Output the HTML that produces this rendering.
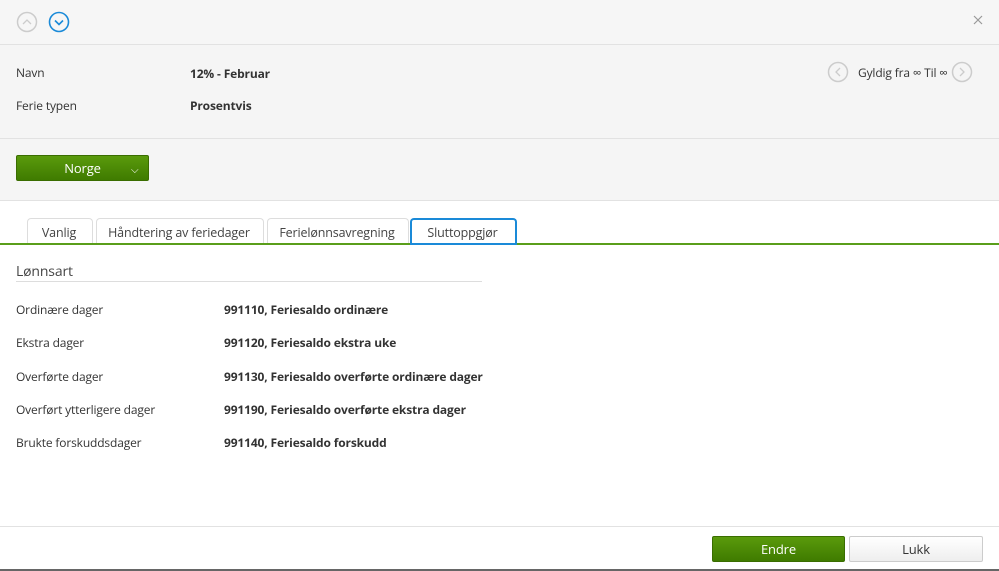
<!DOCTYPE html>
<html><head><meta charset="utf-8"><style>
body{margin:0;width:999px;height:571px;overflow:hidden;font-family:"Open Sans","Liberation Sans",sans-serif;font-size:12px;letter-spacing:-0.15px;color:#333;background:#fff;position:relative}
.a{position:absolute}
.hdr{left:0;top:0;width:999px;height:44px;background:#f6f6f6;border-bottom:1px solid #e2e2e2}
.info{left:0;top:45px;width:999px;height:93px;background:#f5f5f5;border-bottom:1px solid #e2e2e2}
.btnarea{left:0;top:139px;width:999px;height:61px;background:#f5f5f5;border-bottom:1px solid #e2e2e2}
.green{background:linear-gradient(#5a9a0c,#3f7b00);color:#fff;border:1px solid #3a6d00;border-radius:2px;text-align:center}
.tab{top:218px;height:25px;border:1px solid #ddd;border-bottom:none;border-radius:4px 4px 0 0;background:#fff}
.tt{top:218px;height:25px;line-height:29px;text-align:center;font-size:12.5px;color:#444}
.b{font-weight:bold}
</style></head><body>
<div class="a hdr"></div>
<svg class="a" style="left:16px;top:11px" width="22" height="22"><circle cx="11" cy="11" r="9.5" fill="none" stroke="#ccc" stroke-width="1.5"/><path d="M7 13l4-4 4 4" fill="none" stroke="#ccc" stroke-width="1.3"/></svg>
<svg class="a" style="left:48px;top:11px" width="22" height="22"><circle cx="11" cy="11" r="9.5" fill="none" stroke="#1a8ad8" stroke-width="1.6"/><path d="M7 9.5l4 4 4-4" fill="none" stroke="#1a8ad8" stroke-width="1.6"/></svg>
<svg class="a" style="left:973px;top:15px" width="10" height="10"><path d="M1 1l8 8M9 1l-8 8" stroke="#999" stroke-width="1.2"/></svg>
<div class="a info"></div>
<div class="a" style="left:16px;top:64px">Navn</div>
<div class="a b" style="left:190px;top:65px">12% - Februar</div>
<div class="a" style="left:16px;top:97px">Ferie typen</div>
<div class="a b" style="left:190px;top:97px">Prosentvis</div>
<svg class="a" style="left:827px;top:61px" width="22" height="22"><circle cx="11" cy="11" r="9.5" fill="none" stroke="#ccc" stroke-width="1.5"/><path d="M13 7l-4 4 4 4" fill="none" stroke="#ccc" stroke-width="1.3"/></svg>
<div class="a" style="left:858px;top:64px;width:90px;white-space:nowrap">Gyldig fra ∞ Til ∞</div>
<svg class="a" style="left:951px;top:61px" width="22" height="22"><circle cx="11" cy="11" r="9.5" fill="none" stroke="#ccc" stroke-width="1.5"/><path d="M9 7l4 4-4 4" fill="none" stroke="#ccc" stroke-width="1.3"/></svg>
<div class="a btnarea"></div>
<div class="a green" style="left:16px;top:155px;width:131px;height:24px;line-height:24px;font-size:13px">Norge<span style="position:absolute;left:114px;top:1px;font-size:10px">⌵</span></div>
<div class="a tab" style="left:27px;width:64px"></div><div class="a tt" style="left:27px;width:64px">Vanlig</div>
<div class="a tab" style="left:96px;width:166px"></div><div class="a tt" style="left:96px;width:166px">Håndtering av feriedager</div>
<div class="a tab" style="left:267px;width:140px"></div><div class="a tt" style="left:267px;width:140px">Ferielønnsavregning</div>
<div class="a tab" style="left:410px;width:103px;border:2px solid #1a8ad8;border-bottom:none;height:24px"></div><div class="a tt" style="left:410px;width:105px">Sluttoppgjør</div>
<div class="a" style="left:0;top:243px;width:999px;height:2px;background:#5a9e1a"></div>
<div class="a" style="left:410px;top:243px;width:107px;height:2px;background:#1a8ad8"></div>
<div class="a" style="left:16px;top:262px;font-size:14px;color:#444">Lønnsart</div>
<div class="a" style="left:16px;top:281px;width:466px;height:1px;background:#ddd"></div>
<div class="a" style="left:16px;top:301px">Ordinære dager</div><div class="a b" style="left:224px;top:301px">991110, Feriesaldo ordinære</div>
<div class="a" style="left:16px;top:334px">Ekstra dager</div><div class="a b" style="left:224px;top:334px">991120, Feriesaldo ekstra uke</div>
<div class="a" style="left:16px;top:368px">Overførte dager</div><div class="a b" style="left:224px;top:368px">991130, Feriesaldo overførte ordinære dager</div>
<div class="a" style="left:16px;top:401px">Overført ytterligere dager</div><div class="a b" style="left:224px;top:401px">991190, Feriesaldo overførte ekstra dager</div>
<div class="a" style="left:16px;top:434px">Brukte forskuddsdager</div><div class="a b" style="left:224px;top:434px">991140, Feriesaldo forskudd</div>
<div class="a" style="left:0;top:526px;width:999px;height:1px;background:#e2e2e2"></div>
<div class="a green" style="left:712px;top:536px;width:131px;height:24px;line-height:24px;font-size:13px">Endre</div>
<div class="a" style="left:849px;top:536px;width:132px;height:24px;line-height:24px;text-align:center;border:1px solid #ccc;border-radius:2px;background:linear-gradient(#fff,#eee);font-size:13px">Lukk</div>
<div class="a" style="left:0;top:569px;width:999px;height:2px;background:#666"></div>
</body></html>
